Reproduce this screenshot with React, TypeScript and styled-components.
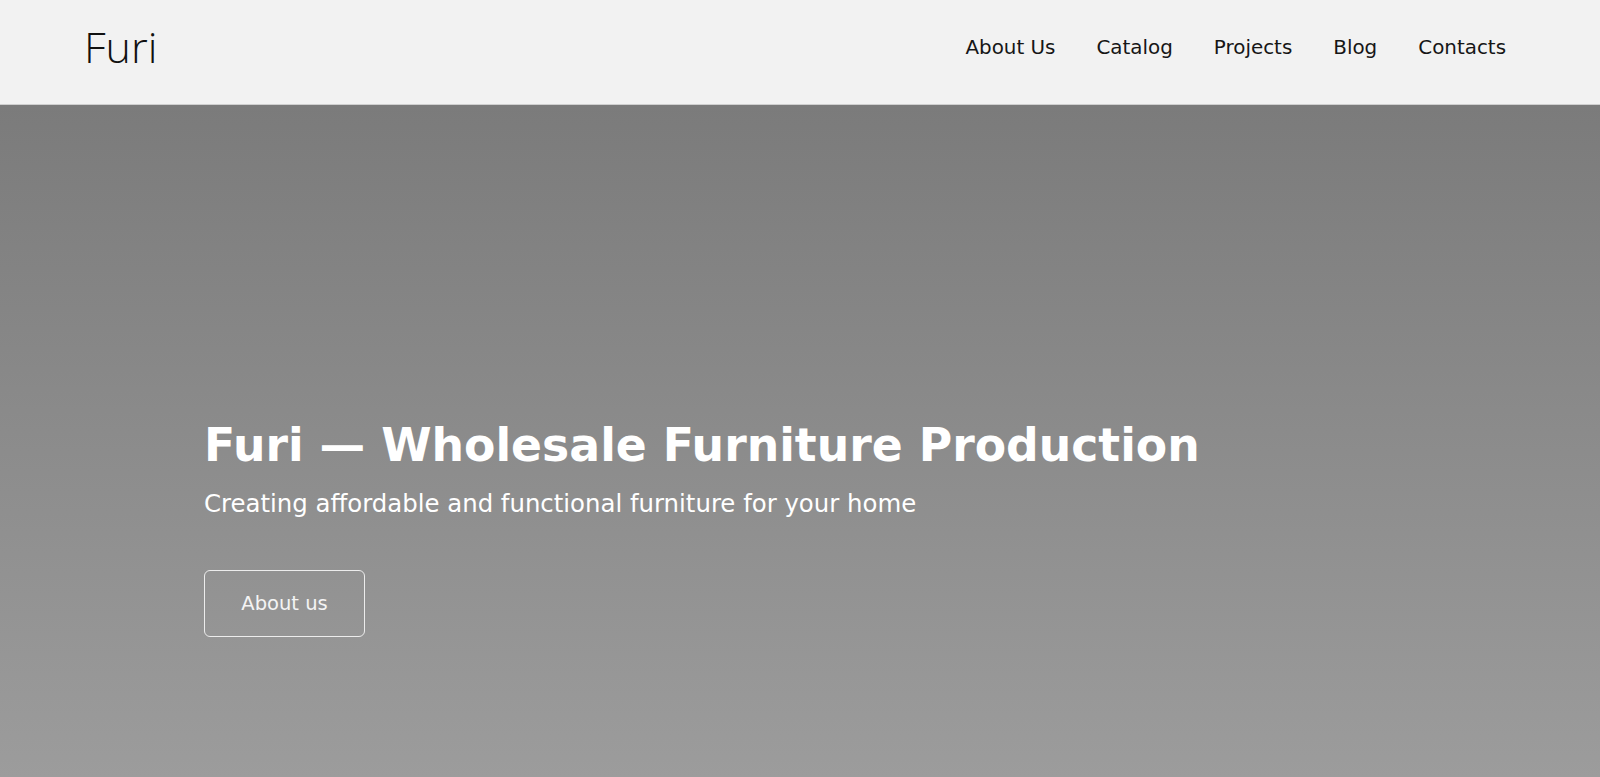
import React from "react";
import styled, { createGlobalStyle } from "styled-components";

const GlobalStyle = createGlobalStyle`
  html, body { margin: 0; padding: 0; }
  body {
    font-family: "DejaVu Sans", "Open Sans", sans-serif;
    background: #9c9c9c;
  }
  #root { min-height: 777px; display: flex; flex-direction: column; }
`;

const Page = styled.div`
  display: flex;
  flex-direction: column;
  min-height: 777px;
`;

const Header = styled.header`
  height: 105px;
  box-sizing: border-box;
  background: #f2f2f2;
  border-bottom: 1px solid #cfcfcf;
  display: flex;
  align-items: center;
  justify-content: space-between;
  padding: 0 94px 8px 84px;
`;

const Logo = styled.a`
  font-family: "Open Sans", sans-serif;
  font-weight: 300;
  font-size: 43px;
  line-height: 1;
  margin-bottom: 3px;
  color: #111111;
  text-decoration: none;
`;

const Nav = styled.nav`
  display: flex;
  align-items: center;
  gap: 41px;
`;

const NavLink = styled.a`
  font-family: "DejaVu Sans", sans-serif;
  font-size: 19.9px;
  color: #161616;
  text-decoration: none;
  line-height: 1;
`;

const Hero = styled.section`
  flex: 1;
  background: linear-gradient(180deg, #7b7b7b 0%, #9c9c9c 100%);
  padding: 313px 0 0 204px;
  display: flex;
  flex-direction: column;
  align-items: flex-start;
`;

const Title = styled.h1`
  margin: 0;
  font-family: "DejaVu Sans", sans-serif;
  font-weight: 700;
  font-size: 45.7px;
  line-height: 55px;
  color: #ffffff;
`;

const Subtitle = styled.p`
  margin: 16px 0 0;
  font-family: "DejaVu Sans", sans-serif;
  font-weight: 400;
  font-size: 24.4px;
  line-height: 29px;
  color: #ffffff;
`;

const OutlineButton = styled.a`
  margin-top: 52px;
  box-sizing: border-box;
  height: 67px;
  width: 161px;
  display: flex;
  align-items: center;
  justify-content: center;
  border: 1.5px solid #ececec;
  border-radius: 6px;
  font-family: "DejaVu Sans", sans-serif;
  font-size: 19.5px;
  color: #f4f4f4;
  text-decoration: none;
`;

const links = ["About Us", "Catalog", "Projects", "Blog", "Contacts"];

export default function App() {
  return (
    <>
      <GlobalStyle />
      <Page>
        <Header>
          <Logo href="#">Furi</Logo>
          <Nav>
            {links.map((l) => (
              <NavLink key={l} href="#">
                {l}
              </NavLink>
            ))}
          </Nav>
        </Header>
        <Hero>
          <Title>Furi — Wholesale Furniture Production</Title>
          <Subtitle>Creating affordable and functional furniture for your home</Subtitle>
          <OutlineButton href="#">About us</OutlineButton>
        </Hero>
      </Page>
    </>
  );
}
